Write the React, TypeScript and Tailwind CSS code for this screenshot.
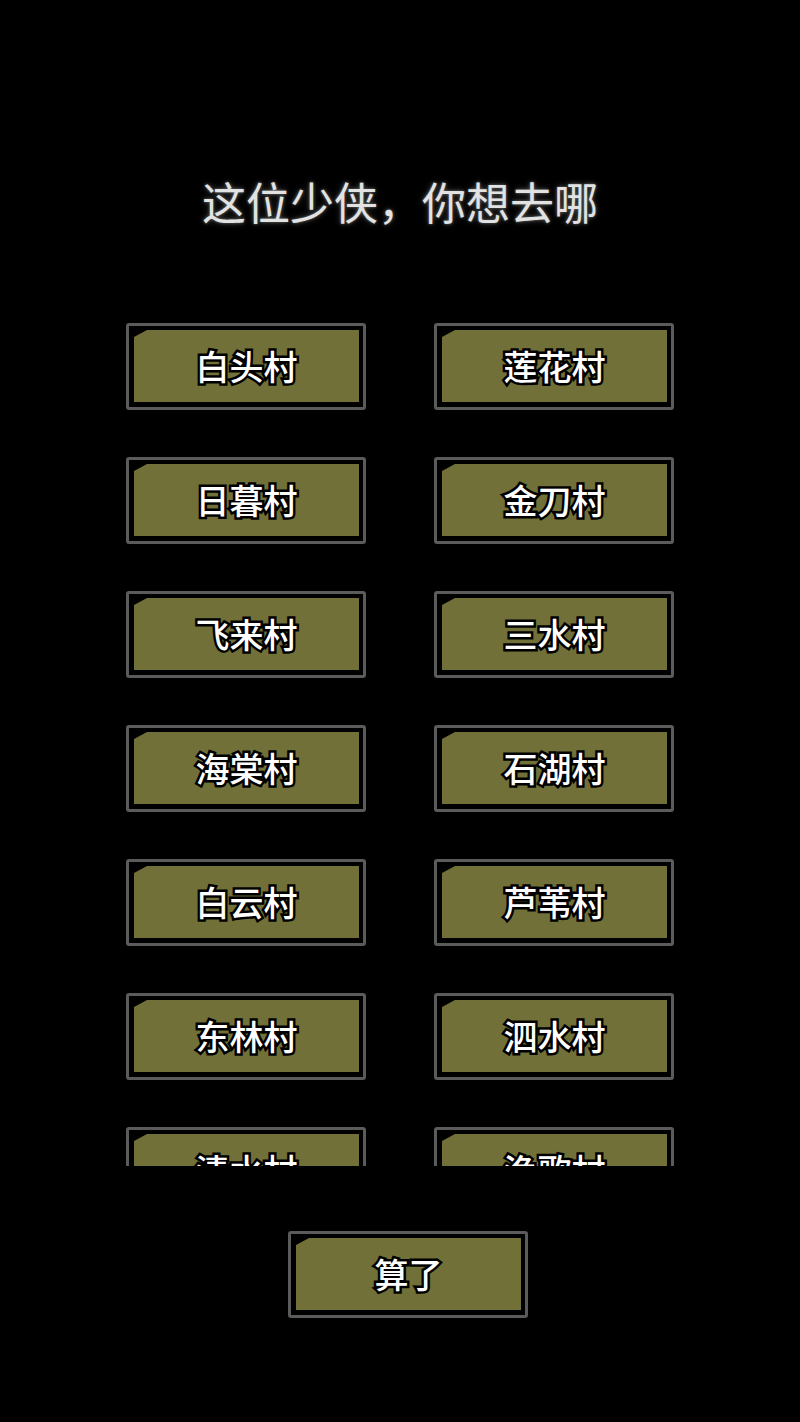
import * as React from "react";

const villages = [
  "白头村",
  "莲花村",
  "日暮村",
  "金刀村",
  "飞来村",
  "三水村",
  "海棠村",
  "石湖村",
  "白云村",
  "芦苇村",
  "东林村",
  "泗水村",
  "清水村",
  "渔歌村",
];

const font = "font-['Noto_Sans_CJK_SC','Noto_Sans',sans-serif]";

function OliveButton({ label }: { label: string }) {
  return (
    <div className="w-[240px] h-[87px] shrink-0 rounded-[3px] border-[3px] border-[#5b5b5b] bg-black pl-[5px] pr-[4px] pt-[4px] pb-[5px]">
      <div className="h-full w-full bg-[#717039] [clip-path:polygon(13px_0,100%_0,100%_100%,0_100%,0_7px)] flex items-center justify-center">
        <span
          className={`${font} text-[34px] leading-none font-medium text-white [-webkit-text-stroke:5px_black] [paint-order:stroke_fill]`}
        >
          {label}
        </span>
      </div>
    </div>
  );
}

export default function App() {
  return (
    <div className="w-[800px] h-[1422px] bg-black flex flex-col items-center">
      <h1
        className={`${font} mt-[173px] h-[56px] text-[44px] leading-[56px] text-[#e2e2e2] font-normal [text-shadow:0_0_3px_#666,0_0_6px_#444]`}
      >
        这位少侠，你想去哪
      </h1>
      <div className="mt-[94px] h-[843px] w-full overflow-hidden flex justify-center">
        <div className="grid grid-cols-[240px_240px] gap-x-[68px] gap-y-[47px]">
          {villages.map((v) => (
            <OliveButton key={v} label={v} />
          ))}
        </div>
      </div>
      <div className="mt-[65px] w-full pl-[288px]">
        <OliveButton label="算了" />
      </div>
    </div>
  );
}
